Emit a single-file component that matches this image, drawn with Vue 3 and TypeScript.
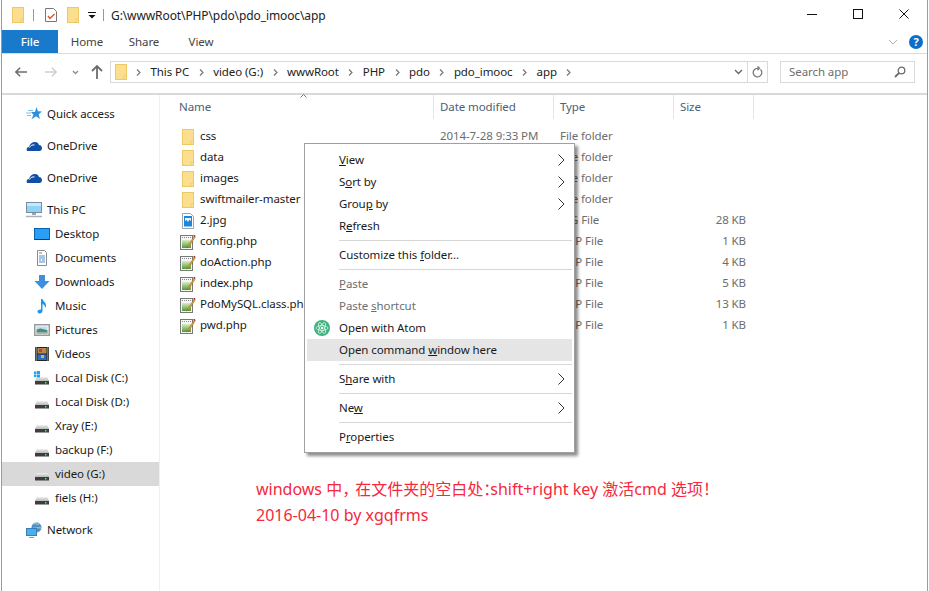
<script setup lang="ts">
interface NavItem { label: string; icon: string; child?: boolean; gap?: boolean; selected?: boolean }
interface FileRow { name: string; icon: string; date: string; type: string; size: string }
interface MenuItem { pre?: string; key?: string; post?: string; arrow?: boolean; disabled?: boolean; hot?: boolean; atom?: boolean; sep?: boolean }

const crumbs = ['This PC', 'video (G:)', 'wwwRoot', 'PHP', 'pdo', 'pdo_imooc', 'app']

const navItems: NavItem[] = [
  { label: 'Quick access', icon: 'star', gap: true },
  { label: 'OneDrive', icon: 'cloud', gap: true },
  { label: 'OneDrive', icon: 'cloud', gap: true },
  { label: 'This PC', icon: 'pc' },
  { label: 'Desktop', icon: 'desktop', child: true },
  { label: 'Documents', icon: 'docs', child: true },
  { label: 'Downloads', icon: 'down', child: true },
  { label: 'Music', icon: 'music', child: true },
  { label: 'Pictures', icon: 'pics', child: true },
  { label: 'Videos', icon: 'film', child: true },
  { label: 'Local Disk (C:)', icon: 'sysdisk', child: true },
  { label: 'Local Disk (D:)', icon: 'disk', child: true },
  { label: 'Xray (E:)', icon: 'disk', child: true },
  { label: 'backup (F:)', icon: 'disk', child: true },
  { label: 'video (G:)', icon: 'disk', child: true, selected: true },
  { label: 'fiels (H:)', icon: 'disk', child: true, gap: true },
  { label: 'Network', icon: 'net' }
]

const files: FileRow[] = [
  { name: 'css', icon: 'folder', date: '2014-7-28 9:33 PM', type: 'File folder', size: '' },
  { name: 'data', icon: 'folder', date: '', type: 'File folder', size: '' },
  { name: 'images', icon: 'folder', date: '', type: 'File folder', size: '' },
  { name: 'swiftmailer-master', icon: 'folder', date: '', type: 'File folder', size: '' },
  { name: '2.jpg', icon: 'jpg', date: '', type: 'JPG File', size: '28 KB' },
  { name: 'config.php', icon: 'php', date: '', type: 'PHP File', size: '1 KB' },
  { name: 'doAction.php', icon: 'php', date: '', type: 'PHP File', size: '4 KB' },
  { name: 'index.php', icon: 'php', date: '', type: 'PHP File', size: '5 KB' },
  { name: 'PdoMySQL.class.php', icon: 'php', date: '', type: 'PHP File', size: '13 KB' },
  { name: 'pwd.php', icon: 'php', date: '', type: 'PHP File', size: '1 KB' }
]

const menu: MenuItem[] = [
  { key: 'V', post: 'iew', arrow: true },
  { pre: 'S', key: 'o', post: 'rt by', arrow: true },
  { pre: 'Grou', key: 'p', post: ' by', arrow: true },
  { pre: 'R', key: 'e', post: 'fresh' },
  { sep: true },
  { pre: 'Customize this ', key: 'f', post: 'older...' },
  { sep: true },
  { key: 'P', post: 'aste', disabled: true },
  { pre: 'Paste ', key: 's', post: 'hortcut', disabled: true },
  { pre: 'Open with Atom', atom: true },
  { pre: 'Open command ', key: 'w', post: 'indow here', hot: true },
  { sep: true },
  { pre: 'S', key: 'h', post: 'are with', arrow: true },
  { sep: true },
  { pre: 'Ne', key: 'w', arrow: true },
  { sep: true },
  { pre: 'P', key: 'r', post: 'operties' }
]
</script>

<template>
  <svg class="defs" width="0" height="0">
    <defs>
      <linearGradient id="phpGreen" x1="0" y1="0" x2="0" y2="1">
        <stop offset="0" stop-color="#dcecc4" />
        <stop offset="1" stop-color="#4f9a3c" />
      </linearGradient>
      <linearGradient id="diskTop" x1="0" y1="0" x2="0" y2="1">
        <stop offset="0" stop-color="#efefef" />
        <stop offset="1" stop-color="#b8b8b8" />
      </linearGradient>
    </defs>
    <symbol id="folder" viewBox="0 0 16 16">
      <rect x="2.500" y=".5" width="11" height="15" fill="#fcdf8e" stroke="#ecc964" />
      <path d="M11 15v-3h2" fill="#fff3c8" stroke="#ecc964" />
    </symbol>
    <symbol id="star" viewBox="0 0 16 16">
      <path d="M10.500 1l1.400 4.300 4.100.2-3.300 2.700 1.200 4.800-3.700-2.700-4.700 3 2-4.600L5 6h4z" fill="#2b8fe0" />
      <path d="M2 4.500h5M0 7h5M1 9.500h4" stroke="#7cc0f0" stroke-width="1.200" />
    </symbol>
    <symbol id="cloud" viewBox="0 0 16 16">
      <path d="M1 13c-1-2 0-4 2-4 .6-3 3-5 6-5 2 0 3.500 1 4 3 2 0 3 1.500 3 3.200 0 1.500-1 2.800-2.500 2.800z" fill="#0f4fa8" />
      <path d="M3.500 9.500c1-2 3-3 5-2.500" fill="none" stroke="#fff" />
    </symbol>
    <symbol id="pc" viewBox="0 0 16 16">
      <rect x=".5" y=".5" width="15" height="10" fill="#8fd3fa" stroke="#7f8b96" />
      <rect x="1" y="1" width="14" height="3" fill="#c2e9fd" />
      <path d="M6 11h4v2H6z" fill="#9aa5ae" />
      <path d="M0 14.500h16" stroke="#a9b2ba" stroke-width="1.500" />
    </symbol>
    <symbol id="desktop" viewBox="0 0 16 16">
      <rect x=".5" y="2.500" width="15" height="11" fill="#2a9df4" stroke="#0b62b0" />
      <path d="M1 13.500h14" stroke="#0a3a78" />
    </symbol>
    <symbol id="docs" viewBox="0 0 16 16">
      <path d="M3.500 .5h7l2 2v13h-9z" fill="#fff" stroke="#8a8a8a" />
      <path d="M5 3h3M5 6h6M5 8h6M5 10h2M8 10h3M5 12h6" stroke="#4a8fcf" />
    </symbol>
    <symbol id="down" viewBox="0 0 16 16">
      <path d="M5 1h6v6h4.500L8 15 .5 7H5z" fill="#3f8fdc" />
    </symbol>
    <symbol id="music" viewBox="0 0 16 16">
      <path d="M7 1h1.500c.3 2.500 3.500 3 3.500 6.500 0 1-.4 1.800-.9 2.500.2-2.500-1.500-3.500-2.600-4V13c0 1.600-1.400 2.500-2.800 2.500S3.500 14.800 3.500 13.600 5 11.300 7 11.600z" fill="#1e96e8" />
    </symbol>
    <symbol id="pics" viewBox="0 0 16 16">
      <rect x=".75" y="2.750" width="14.500" height="10.500" fill="#fff" stroke="#9a9a9a" stroke-width="1.500" />
      <rect x="2.500" y="4.500" width="11" height="3" fill="#bcdcf0" />
      <path d="M2.500 7.500l4-1 7 1.500v3.500h-11z" fill="#4f8a7a" />
      <path d="M2.500 10h11v1.500h-11z" fill="#8fb4a8" />
    </symbol>
    <symbol id="film" viewBox="0 0 16 16">
      <rect x="1" y="1" width="14" height="14" fill="#222" />
      <rect x="3.500" y="2" width="9" height="5.500" fill="#b88a4a" />
      <rect x="5" y="3" width="3" height="3" fill="#c23a50" />
      <rect x="3.500" y="8.500" width="9" height="5.500" fill="#2a6fc8" />
      <rect x="7" y="9" width="3" height="3" fill="#e0b040" />
      <path d="M2.200 1.500v13M13.800 1.500v13" stroke="#eee" stroke-width="1.200" stroke-dasharray="1 1" />
    </symbol>
    <symbol id="disk" viewBox="0 0 16 16">
      <path d="M2.500 7h11L15 11H1z" fill="url(#diskTop)" />
      <rect x="1" y="11" width="14" height="3.500" fill="#3d3d3d" />
      <rect x="11" y="12" width="1.500" height="1.500" fill="#5fe05f" />
    </symbol>
    <symbol id="sysdisk" viewBox="0 0 16 16">
      <path d="M2.500 7h11L15 11H1z" fill="url(#diskTop)" />
      <rect x="1" y="11" width="14" height="3.500" fill="#3d3d3d" />
      <rect x="11" y="12" width="1.500" height="1.500" fill="#5fe05f" />
      <path d="M0 1.500h2.500v2.500H0zM3 1h3v3H3zM0 4.500h2.500V7H0zM3 4.500h3v3H3z" fill="#19a6ee" />
    </symbol>
    <symbol id="net" viewBox="0 0 16 16">
      <circle cx="10.500" cy="5.500" r="5" fill="#4f8fcf" />
      <path d="M8 2c2-1 3 1 5 0M7 6c2 1 4-1 8 0" stroke="#b8e0a8" fill="none" />
      <rect x=".5" y="6.500" width="10" height="7" fill="#46b1f0" stroke="#3a7db5" />
      <path d="M3 15.500h5" stroke="#8a9aa8" />
    </symbol>
    <symbol id="jpg" viewBox="0 0 16 16">
      <path d="M2.500 .5h8l3 3v12h-11z" fill="#fff" stroke="#9aa5ae" />
      <rect x="4" y="3" width="8" height="10.500" fill="#1f86d8" />
      <path d="M5 5h6v3l-1.500-1.200L8 9 6.500 7 5 8z" fill="#e4f3fc" />
    </symbol>
    <symbol id="php" viewBox="0 0 16 16">
      <rect x=".5" y="1.500" width="12" height="14" fill="#f6f6f6" stroke="#777" />
      <path d="M2 3.500h9" stroke="#8a8a8a" stroke-dasharray="1 1" />
      <rect x="2" y="6" width="9" height="8" fill="url(#phpGreen)" />
      <path d="M14 2.500L8 11.500l-1.500 2.500 2.500-1.500 6-9z" fill="#f0b030" stroke="#7a5a20" stroke-width=".5" />
      <path d="M14 .8l1.700 1.100-.8 1.200-1.700-1.100z" fill="#8e1c1c" />
    </symbol>
  </svg>

  <div class="window">
    <header class="titlebar">
      <div class="quick">
        <svg class="ic16" width="16" height="16"><use href="#folder" /></svg>
        <i class="vbar"></i>
        <svg class="qdoc" width="14" height="16" viewBox="0 0 14 16">
          <path d="M1.500 1.500h8l3 3v10h-11z" fill="#fff" stroke="#777" />
          <path d="M4 9l2 2.500L10.500 7" fill="none" stroke="#e0562b" stroke-width="1.500" />
        </svg>
        <svg class="ic16" width="16" height="16"><use href="#folder" /></svg>
        <svg class="qdrop" width="8" height="8" viewBox="0 0 8 8">
          <path d="M0 1.500h8" stroke="#111" />
          <path d="M.5 4h7L4 7.500z" fill="#111" />
        </svg>
        <i class="vbar"></i>
      </div>
      <span class="path">G:\wwwRoot\PHP\pdo\pdo_imooc\app</span>
      <div class="controls">
        <svg width="12" height="12" viewBox="0 0 12 12"><path d="M1 6.500h10" stroke="#111" /></svg>
        <svg width="12" height="12" viewBox="0 0 12 12"><rect x="1.500" y="1.500" width="9" height="9" fill="none" stroke="#111" /></svg>
        <svg width="12" height="12" viewBox="0 0 12 12"><path d="M1.500 1.500l9 9M10.500 1.500l-9 9" stroke="#111" /></svg>
      </div>
    </header>

    <nav class="ribbon">
      <span class="tab tab-file">File</span>
      <span class="tab">Home</span>
      <span class="tab">Share</span>
      <span class="tab">View</span>
      <div class="ribbon-right">
        <svg width="10" height="6" viewBox="0 0 10 6"><path d="M1 1l4 4 4-4" fill="none" stroke="#b0b0b0" /></svg>
        <span class="help">?</span>
      </div>
    </nav>

    <section class="addressbar">
      <div class="arrows">
        <svg width="12" height="12" viewBox="0 0 14 12"><path d="M6 1L1 6l5 5M1 6h13" fill="none" stroke="#6d6d6d" stroke-width="1.800" /></svg>
        <svg class="a-fwd" width="12" height="12" viewBox="0 0 14 12"><path d="M8 1l5 5-5 5M13 6H0" fill="none" stroke="#d0d0d0" stroke-width="1.800" /></svg>
        <svg class="a-drop" width="7" height="5" viewBox="0 0 7 5"><path d="M1 1l2.500 2.500L6 1" fill="none" stroke="#8c8c8c" stroke-width="1.300" /></svg>
        <svg class="a-up" width="12" height="14" viewBox="0 0 12 14"><path d="M1 6l5-5 5 5M6 1v13" fill="none" stroke="#6d6d6d" stroke-width="1.800" /></svg>
      </div>
      <div class="addr">
        <svg class="ic16" width="16" height="16"><use href="#folder" /></svg>
        <div class="crumbs">
          <template v-for="c in crumbs" :key="c">
            <svg class="crumb-sep" width="5" height="7" viewBox="0 0 5 7"><path d="M1 .5l3 3-3 3" fill="none" stroke="#777" stroke-width="1.200" /></svg>
            <span class="up1">{{ c }}</span>
          </template>
          <svg class="crumb-sep" width="5" height="7" viewBox="0 0 5 7"><path d="M1 .5l3 3-3 3" fill="none" stroke="#777" stroke-width="1.200" /></svg>
        </div>
        <svg class="addr-drop" width="9" height="6" viewBox="0 0 9 6"><path d="M1 1l3.500 3.500L8 1" fill="none" stroke="#666" stroke-width="1.400" /></svg>
        <div class="refresh">
          <svg width="11" height="12" viewBox="0 0 11 12"><path d="M8.500 3.500a4.300 4.300 0 1 1-3-1.200h1M5.500 .3l2 2-2 2" fill="none" stroke="#7a7a7a" stroke-width="1.300" /></svg>
        </div>
      </div>
      <div class="search">
        <span class="up1">Search app</span>
        <svg width="12" height="12" viewBox="0 0 12 12"><circle cx="7.500" cy="4.500" r="3.300" fill="none" stroke="#6d6d6d" stroke-width="1.300" /><path d="M5 7l-4 4" stroke="#6d6d6d" stroke-width="1.800" /></svg>
      </div>
    </section>

    <main class="body">
      <aside class="sidebar">
        <div
          v-for="(item, i) in navItems"
          :key="i"
          class="nav-row"
          :class="{ child: item.child, gap: item.gap, selected: item.selected }"
        >
          <svg class="ic16" width="16" height="16"><use :href="'#' + item.icon" /></svg>
          <span class="up1">{{ item.label }}</span>
        </div>
      </aside>

      <section class="content">
        <div class="sort-caret">
          <svg width="7" height="4" viewBox="0 0 7 4"><path d="M.5 3.500l3-3 3 3" fill="none" stroke="#777" /></svg>
        </div>
        <div class="col-head">
          <span class="col c-name"><span class="up1">Name</span></span>
          <span class="col c-date"><span class="up1">Date modified</span></span>
          <span class="col c-type"><span class="up1">Type</span></span>
          <span class="col c-size"><span class="up1">Size</span></span>
        </div>
        <div class="file-list">
          <div v-for="f in files" :key="f.name" class="file-row">
            <div class="c-name f-name">
              <svg class="ic16" width="16" height="16"><use :href="'#' + f.icon" /></svg>
              <span class="up1">{{ f.name }}</span>
            </div>
            <span class="c-date f-muted up1">{{ f.date }}</span>
            <span class="c-type f-muted up1">{{ f.type }}</span>
            <span class="c-size f-muted f-size up1">{{ f.size }}</span>
          </div>
        </div>

        <ul class="ctx">
          <template v-for="(m, i) in menu" :key="i">
            <li v-if="m.sep" class="ctx-sep"></li>
            <li v-else class="ctx-item" :class="{ disabled: m.disabled, hot: m.hot }">
              <svg v-if="m.atom" class="atom" width="16" height="16" viewBox="0 0 16 16">
                <circle cx="8" cy="8" r="8" fill="#3fb27f" />
                <g fill="none" stroke="#d8f5e6" stroke-width=".8">
                  <ellipse cx="8" cy="8" rx="6" ry="2.400" />
                  <ellipse cx="8" cy="8" rx="6" ry="2.400" transform="rotate(60 8 8)" />
                  <ellipse cx="8" cy="8" rx="6" ry="2.400" transform="rotate(120 8 8)" />
                </g>
                <circle cx="8" cy="8" r="1.200" fill="#fff" />
              </svg>
              <span class="ctx-label up1">{{ m.pre }}<u v-if="m.key">{{ m.key }}</u>{{ m.post }}</span>
              <svg v-if="m.arrow" class="ctx-arrow" width="7" height="12" viewBox="0 0 7 12"><path d="M.5 .5L6 6 .5 11.500" fill="none" stroke="#333" /></svg>
            </li>
          </template>
        </ul>

        <div class="note">
          <p>windows 中<span class="tight-comma">，</span>在文件夹的空白处<span class="tight-colon">：</span>shift+right key 激活cmd 选项！</p>
          <p>2016-04-10 by xgqfrms</p>
        </div>
      </section>
    </main>
  </div>
</template>

<style>
html, body {
  margin: 0;
  background: #fff;
}
</style>

<style scoped>
.defs {
  position: absolute;
}

.window {
  width: 929px;
  height: 591px;
  box-sizing: border-box;
  padding: 0 2px;
  display: flex;
  flex-direction: column;
  overflow: hidden;
  font-family: "Noto Sans", "Open Sans", sans-serif;
  font-size: 11.5px;
  letter-spacing: -0.08px;
  color: #1a1a1a;
  position: relative;
}
.window::before {
  content: "";
  position: absolute;
  left: 1px;
  top: 0;
  bottom: 0;
  width: 1px;
  background: #7ba3d0;
}
.window::after {
  content: "";
  position: absolute;
  right: 1px;
  top: 0;
  bottom: 0;
  width: 1px;
  background: #7ba3d0;
}

.ic16 {
  flex: none;
}
.up1 {
  margin-top: -2px;
}

.titlebar {
  height: 30px;
  display: flex;
  align-items: center;
  flex: none;
}
.quick {
  display: flex;
  align-items: center;
  padding-left: 8px;
}
.vbar {
  width: 1px;
  height: 12px;
  background: #9a9a9a;
  margin: 0 7px;
}
.quick .qdoc {
  margin: 0 7px 0 3px;
}
.qdrop {
  margin-left: 7px;
}
.path {
  color: #222;
  font-size: 12px;
  letter-spacing: -0.1px;
}
.controls {
  margin-left: auto;
  margin-top: -2px;
  display: flex;
  gap: 34px;
  padding-right: 17px;
}

.ribbon {
  height: 23px;
  display: flex;
  align-items: center;
  flex: none;
  border-bottom: 1px solid #dadbdc;
  color: #444;
}
.tab {
  width: 56px;
  margin-right: 1px;
  text-align: center;
}
.tab-file {
  height: 23px;
  line-height: 23px;
  background: #1979ca;
  color: #fff;
  font-weight: 500;
}
.ribbon-right {
  margin-left: auto;
  display: flex;
  align-items: center;
  gap: 11px;
  padding-right: 4px;
}
.help {
  width: 14px;
  height: 14px;
  border-radius: 50%;
  background: #0a6fc9;
  color: #fff;
  font-size: 11px;
  font-weight: 700;
  line-height: 14px;
  text-align: center;
}

.addressbar {
  height: 36px;
  padding-bottom: 3px;
  display: flex;
  align-items: center;
  flex: none;
  border-bottom: 2px solid #d9d9d9;
}
.arrows {
  width: 108px;
  display: flex;
  align-items: center;
  padding-left: 13px;
  box-sizing: border-box;
}
.a-fwd {
  margin-left: 18px;
}
.a-drop {
  margin-left: 15px;
}
.a-up {
  margin-left: 12px;
}
.addr {
  width: 658px;
  height: 22px;
  box-sizing: border-box;
  border: 1px solid #d9d9d9;
  display: flex;
  align-items: center;
  padding-left: 2px;
}
.crumbs {
  flex: 1;
  display: flex;
  align-items: center;
  gap: 9.5px;
  margin-left: 7px;
  color: #222;
}
.addr-drop {
  margin-right: 4px;
}
.refresh {
  width: 19px;
  height: 20px;
  border-left: 1px solid #d9d9d9;
  display: flex;
  align-items: center;
  justify-content: center;
}
.search {
  width: 135px;
  height: 22px;
  box-sizing: border-box;
  margin-left: 12px;
  border: 1px solid #d9d9d9;
  display: flex;
  align-items: center;
  justify-content: space-between;
  padding: 0 8px;
  color: #6d6d6d;
}

.body {
  flex: 1;
  display: flex;
  min-height: 0;
}
.sidebar {
  width: 158px;
  flex: none;
  box-sizing: border-box;
  border-right: 1px solid #f0f0f0;
  padding-top: 7px;
  margin-right: 1px;
}
.nav-row {
  height: 24px;
  display: flex;
  align-items: center;
  gap: 5px;
  padding-left: 24px;
  color: #1a1a1a;
}
.nav-row.child {
  padding-left: 32px;
}
.nav-row.gap {
  margin-bottom: 8px;
}
.nav-row.selected {
  background: #d9d9d9;
}

.content {
  flex: 1;
  position: relative;
  min-width: 0;
}
.sort-caret {
  position: absolute;
  left: 139px;
  top: -1px;
  line-height: 0;
}
.col-head {
  height: 24px;
  display: flex;
  align-items: stretch;
  padding-left: 12px;
}
.col {
  box-sizing: border-box;
  padding-left: 6px;
  display: flex;
  align-items: center;
  color: #4c607a;
  border-right: 1px solid #e5e5e5;
}
.c-name {
  width: 261px;
  flex: none;
}
.c-date,
.c-type {
  width: 120px;
  flex: none;
}
.c-size {
  width: 80px;
  flex: none;
}
.file-list {
  padding-top: 7px;
}
.file-row {
  height: 21px;
  display: flex;
  align-items: center;
  padding-left: 12px;
}
.f-name {
  display: flex;
  align-items: center;
  gap: 4px;
  box-sizing: border-box;
  padding-left: 7px;
  color: #1a1a1a;
}
.f-muted {
  box-sizing: border-box;
  padding-left: 6px;
  color: #6d6d6d;
}
.f-size {
  text-align: right;
  padding-right: 8px;
}

.ctx {
  position: absolute;
  left: 143px;
  top: 48px;
  width: 271px;
  box-sizing: border-box;
  margin: 0;
  padding: 5px 2px 4px;
  list-style: none;
  background: #fff;
  border: 1px solid #a0a0a0;
  box-shadow: 3px 3px 3px rgba(0, 0, 0, 0.45);
  color: #1a1a1a;
}
.ctx-item {
  height: 22px;
  display: flex;
  align-items: center;
  position: relative;
  padding-left: 32px;
}
.ctx-item.hot {
  background: #e5e5e5;
}
.ctx-item.disabled {
  color: #6d6d6d;
}
.ctx-sep {
  height: 1px;
  background: #d7d7d7;
  margin: 3px 0 3px 32px;
}
.ctx-arrow {
  position: absolute;
  right: 7px;
  top: 5px;
}
.atom {
  position: absolute;
  left: 7px;
  top: 3px;
}
.ctx-label {
  white-space: pre;
}

.note {
  position: absolute;
  left: 95px;
  top: 381px;
  font-family: "Noto Sans", "Noto Sans CJK SC", sans-serif;
  font-size: 16px;
  letter-spacing: 0;
  color: #f5283c;
}
.note p {
  margin: 0;
  height: 26px;
  line-height: 26px;
  white-space: pre;
}
.tight-comma {
  letter-spacing: -3px;
}
.tight-colon {
  letter-spacing: -9px;
}
</style>
